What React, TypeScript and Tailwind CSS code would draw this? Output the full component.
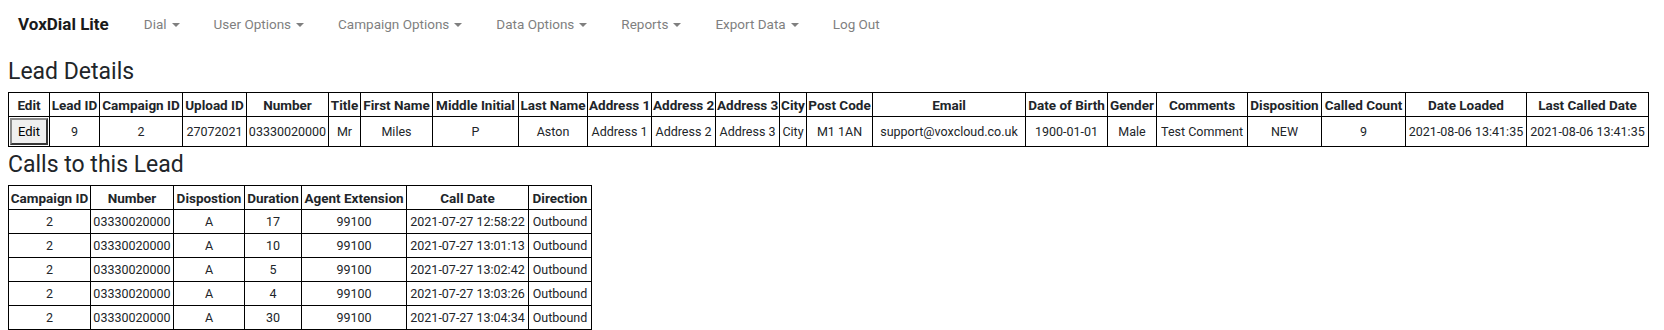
import React from "react";

type Col = { label: string; w: string };

const navItems = [
	{ label: "Dial", caret: true },
	{ label: "User Options", caret: true },
	{ label: "Campaign Options", caret: true },
	{ label: "Data Options", caret: true },
	{ label: "Reports", caret: true },
	{ label: "Export Data", caret: true },
	{ label: "Log Out", caret: false },
];

const leadCols: Col[] = [
	{ label: "Edit", w: "w-[41px]" },
	{ label: "Lead ID", w: "w-[50px]" },
	{ label: "Campaign ID", w: "w-[83px]" },
	{ label: "Upload ID", w: "w-[64px]" },
	{ label: "Number", w: "w-[82px]" },
	{ label: "Title", w: "w-[32px]" },
	{ label: "First Name", w: "w-[72px]" },
	{ label: "Middle Initial", w: "w-[86px]" },
	{ label: "Last Name", w: "w-[69px]" },
	{ label: "Address 1", w: "w-[64px]" },
	{ label: "Address 2", w: "w-[64px]" },
	{ label: "Address 3", w: "w-[64px]" },
	{ label: "City", w: "w-[27px]" },
	{ label: "Post Code", w: "w-[66px]" },
	{ label: "Email", w: "w-[153px]" },
	{ label: "Date of Birth", w: "w-[82px]" },
	{ label: "Gender", w: "w-[49px]" },
	{ label: "Comments", w: "w-[91px]" },
	{ label: "Disposition", w: "w-[74px]" },
	{ label: "Called Count", w: "w-[84px]" },
	{ label: "Date Loaded", w: "w-[121px]" },
	{ label: "Last Called Date", w: "w-[122px]" },
];

const lead = [
	"9",
	"2",
	"27072021",
	"03330020000",
	"Mr",
	"Miles",
	"P",
	"Aston",
	"Address 1",
	"Address 2",
	"Address 3",
	"City",
	"M1 1AN",
	"support@voxcloud.co.uk",
	"1900-01-01",
	"Male",
	"Test Comment",
	"NEW",
	"9",
	"2021-08-06 13:41:35",
	"2021-08-06 13:41:35",
];

const callCols: Col[] = [
	{ label: "Campaign ID", w: "w-[82px]" },
	{ label: "Number", w: "w-[83px]" },
	{ label: "Dispostion", w: "w-[71px]" },
	{ label: "Duration", w: "w-[57px]" },
	{ label: "Agent Extension", w: "w-[105px]" },
	{ label: "Call Date", w: "w-[122px]" },
	{ label: "Direction", w: "w-[63px]" },
];

const calls = [
	["2", "03330020000", "A", "17", "99100", "2021-07-27 12:58:22", "Outbound"],
	["2", "03330020000", "A", "10", "99100", "2021-07-27 13:01:13", "Outbound"],
	["2", "03330020000", "A", "5", "99100", "2021-07-27 13:02:42", "Outbound"],
	["2", "03330020000", "A", "4", "99100", "2021-07-27 13:03:26", "Outbound"],
	["2", "03330020000", "A", "30", "99100", "2021-07-27 13:04:34", "Outbound"],
	// next row only shows its top edge in the frame
	["", "", "", "", "", "", ""],
];

const thClass =
	"border border-black px-px py-0 h-[24px] text-center font-bold text-[13.5px] leading-[16px] whitespace-nowrap";
const tdClass =
	"border border-black px-px py-0 h-[24px] text-center text-[12.5px] leading-[16px] whitespace-nowrap";

const Navbar: React.FC = () => (
	<nav className="h-[48px] flex items-center">
		<span className="pl-[18px] pr-[18px] text-[17px] leading-[24px] font-bold text-[#1a1a1a]">
			VoxDial Lite
		</span>
		<ul className="flex items-center">
			{navItems.map((item) => (
				<li
					key={item.label}
					className="flex items-center px-[17px] text-[13.5px] leading-[24px] text-[#7f7f7f]"
				>
					<span>{item.label}</span>
					{item.caret && (
						<span className="ml-[5px] mt-[2px] w-0 h-0 border-t-[4px] border-x-[4px] border-t-[#7f7f7f] border-x-transparent" />
					)}
				</li>
			))}
		</ul>
	</nav>
);

export default function App() {
	return (
		<div className="min-h-screen bg-white font-['Roboto',sans-serif] text-[#212529]">
			<Navbar />
			<div className="px-2">
				<h3 className="mt-[10px] text-[23px] leading-[28px] font-normal">Lead Details</h3>
				<table className="mt-[6px] table-fixed border-collapse w-[1640px]">
					<thead>
						<tr>
							{leadCols.map((c) => (
								<th key={c.label} className={`${thClass} ${c.w}`}>
									{c.label}
								</th>
							))}
						</tr>
					</thead>
					<tbody>
						<tr>
							<td className="border border-black p-px text-center">
								<button className="w-full h-[27px] bg-[#efefef] border-2 [border-style:outset] border-[#8a8a8a] text-[13px] leading-[16px] text-black">
									Edit
								</button>
							</td>
							{lead.map((v, i) => (
								<td key={i} className={tdClass}>
									{v}
								</td>
							))}
						</tr>
					</tbody>
				</table>

				<h3 className="mt-[4px] text-[23px] leading-[28px] font-normal">Calls to this Lead</h3>
				<table className="mt-[6px] table-fixed border-collapse w-[583px]">
					<thead>
						<tr>
							{callCols.map((c) => (
								<th key={c.label} className={`${thClass} ${c.w}`}>
									{c.label}
								</th>
							))}
						</tr>
					</thead>
					<tbody>
						{calls.map((row, r) => (
							<tr key={r}>
								{row.map((v, i) => (
									<td key={i} className={tdClass}>
										{v}
									</td>
								))}
							</tr>
						))}
					</tbody>
				</table>
			</div>
		</div>
	);
}
